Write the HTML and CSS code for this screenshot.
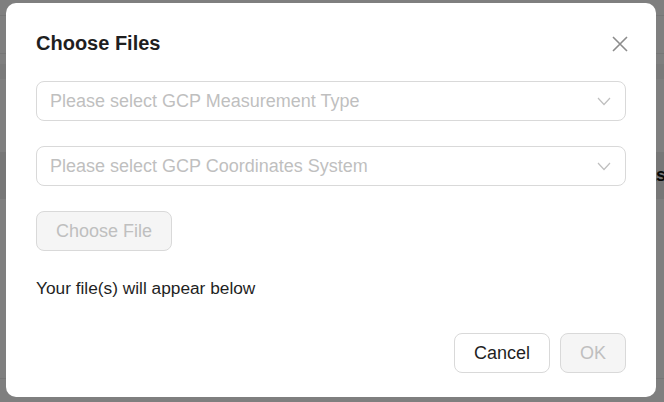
FILE: index.html
```html
<!DOCTYPE html>
<html>
<head>
<meta charset="utf-8">
<link rel="stylesheet" href="styles.css">
</head>
<body>
<div class="page">
  <div class="pg-top"></div>
  <div class="pg-head"></div>
  <div class="pg-gap1"></div>
  <div class="pg-band"></div>
  <div class="pg-gap2"></div>
  <div class="pg-row"><span class="pg-word">Meas</span></div>
  <div class="pg-fill"></div>
</div>
<div class="overlay"></div>
<div class="modal">
  <div class="modal-head">
    <h2 class="title">Choose Files</h2>
    <button class="close" aria-label="Close">
      <svg width="16" height="16" viewBox="0 0 16 16"><path d="M1 1L15 15M15 1L1 15" stroke="#8c8c8c" stroke-width="1.6" fill="none"/></svg>
    </button>
  </div>
  <div class="select">
    <span class="ph">Please select GCP Measurement Type</span>
    <svg class="chev" width="14" height="9" viewBox="0 0 14 9"><path d="M1 1L7 7.5L13 1" stroke="#bfbfbf" stroke-width="1.2" fill="none"/></svg>
  </div>
  <div class="select">
    <span class="ph">Please select GCP Coordinates System</span>
    <svg class="chev" width="14" height="9" viewBox="0 0 14 9"><path d="M1 1L7 7.5L13 1" stroke="#bfbfbf" stroke-width="1.2" fill="none"/></svg>
  </div>
  <div class="file-row"><button class="btn disabled">Choose File</button></div>
  <p class="hint">Your file(s) will appear below</p>
  <div class="footer">
    <button class="btn">Cancel</button>
    <button class="btn disabled">OK</button>
  </div>
</div>
</body>
</html>
```

FILE: styles.css
```css
* { box-sizing: border-box; }
html, body { margin: 0; padding: 0; }
body {
  width: 664px;
  height: 402px;
  overflow: hidden;
  background: #ffffff;
  font-family: "Liberation Sans", Arial, sans-serif;
  position: relative;
}
.page { width: 664px; height: 402px; display: flex; flex-direction: column; overflow: hidden; }
.pg-top { height: 16px; border-bottom: 1px solid #ececec; }
.pg-head { height: 38px; border-bottom: 1px solid #ececec; }
.pg-gap1 { height: 10px; }
.pg-band { height: 15px; background: #f4f4f4; }
.pg-gap2 { height: 73px; }
.pg-row {
  height: 47px;
  background: #eeeeee;
  display: flex;
  align-items: center;
  padding-left: 621px;
  white-space: nowrap;
  overflow: hidden;
}
.pg-word { font-size: 18px; font-weight: bold; color: #111; }
.pg-fill { height: 180px; border-bottom: 1px solid #ececec; }
.overlay {
  position: absolute;
  inset: 0;
  background: rgba(0, 0, 0, 0.5);
}
.modal {
  position: absolute;
  left: 6px;
  top: 3px;
  width: 650px;
  height: 394px;
  background: #fff;
  border-radius: 10px;
  padding: 26px 30px 24px 30px;
  display: flex;
  flex-direction: column;
}
.modal-head {
  display: flex;
  justify-content: space-between;
  align-items: center;
  height: 28px;
  margin-bottom: 24px;
}
.title {
  margin: 0;
  font-size: 20px;
  line-height: 28px;
  font-weight: bold;
  color: #1f1f1f;
}
.close {
  border: 0;
  background: none;
  padding: 0;
  width: 16px;
  height: 16px;
  margin-right: -2px;
  margin-top: 2px;
  display: flex;
}
.select {
  height: 40px;
  border: 1px solid #d9d9d9;
  border-radius: 8px;
  display: flex;
  align-items: center;
  justify-content: space-between;
  padding: 0 14px 0 13px;
  margin-bottom: 25px;
}
.ph { font-size: 18px; color: #bfbfbf; }
.chev { display: block; }
.file-row { display: flex; }
.btn {
  height: 40px;
  padding: 0 19px;
  border: 1px solid #d9d9d9;
  border-radius: 8px;
  background: #fff;
  font-family: "Liberation Sans", Arial, sans-serif;
  font-size: 18px;
  color: #1f1f1f;
}
.btn.disabled { background: #f5f5f5; color: #bfbfbf; }
.hint {
  margin: 23px 0 0 0;
  font-size: 17.3px;
  line-height: 28px;
  color: #1f1f1f;
}
.footer {
  margin-top: 31px;
  display: flex;
  justify-content: flex-end;
  gap: 10px;
}
```
